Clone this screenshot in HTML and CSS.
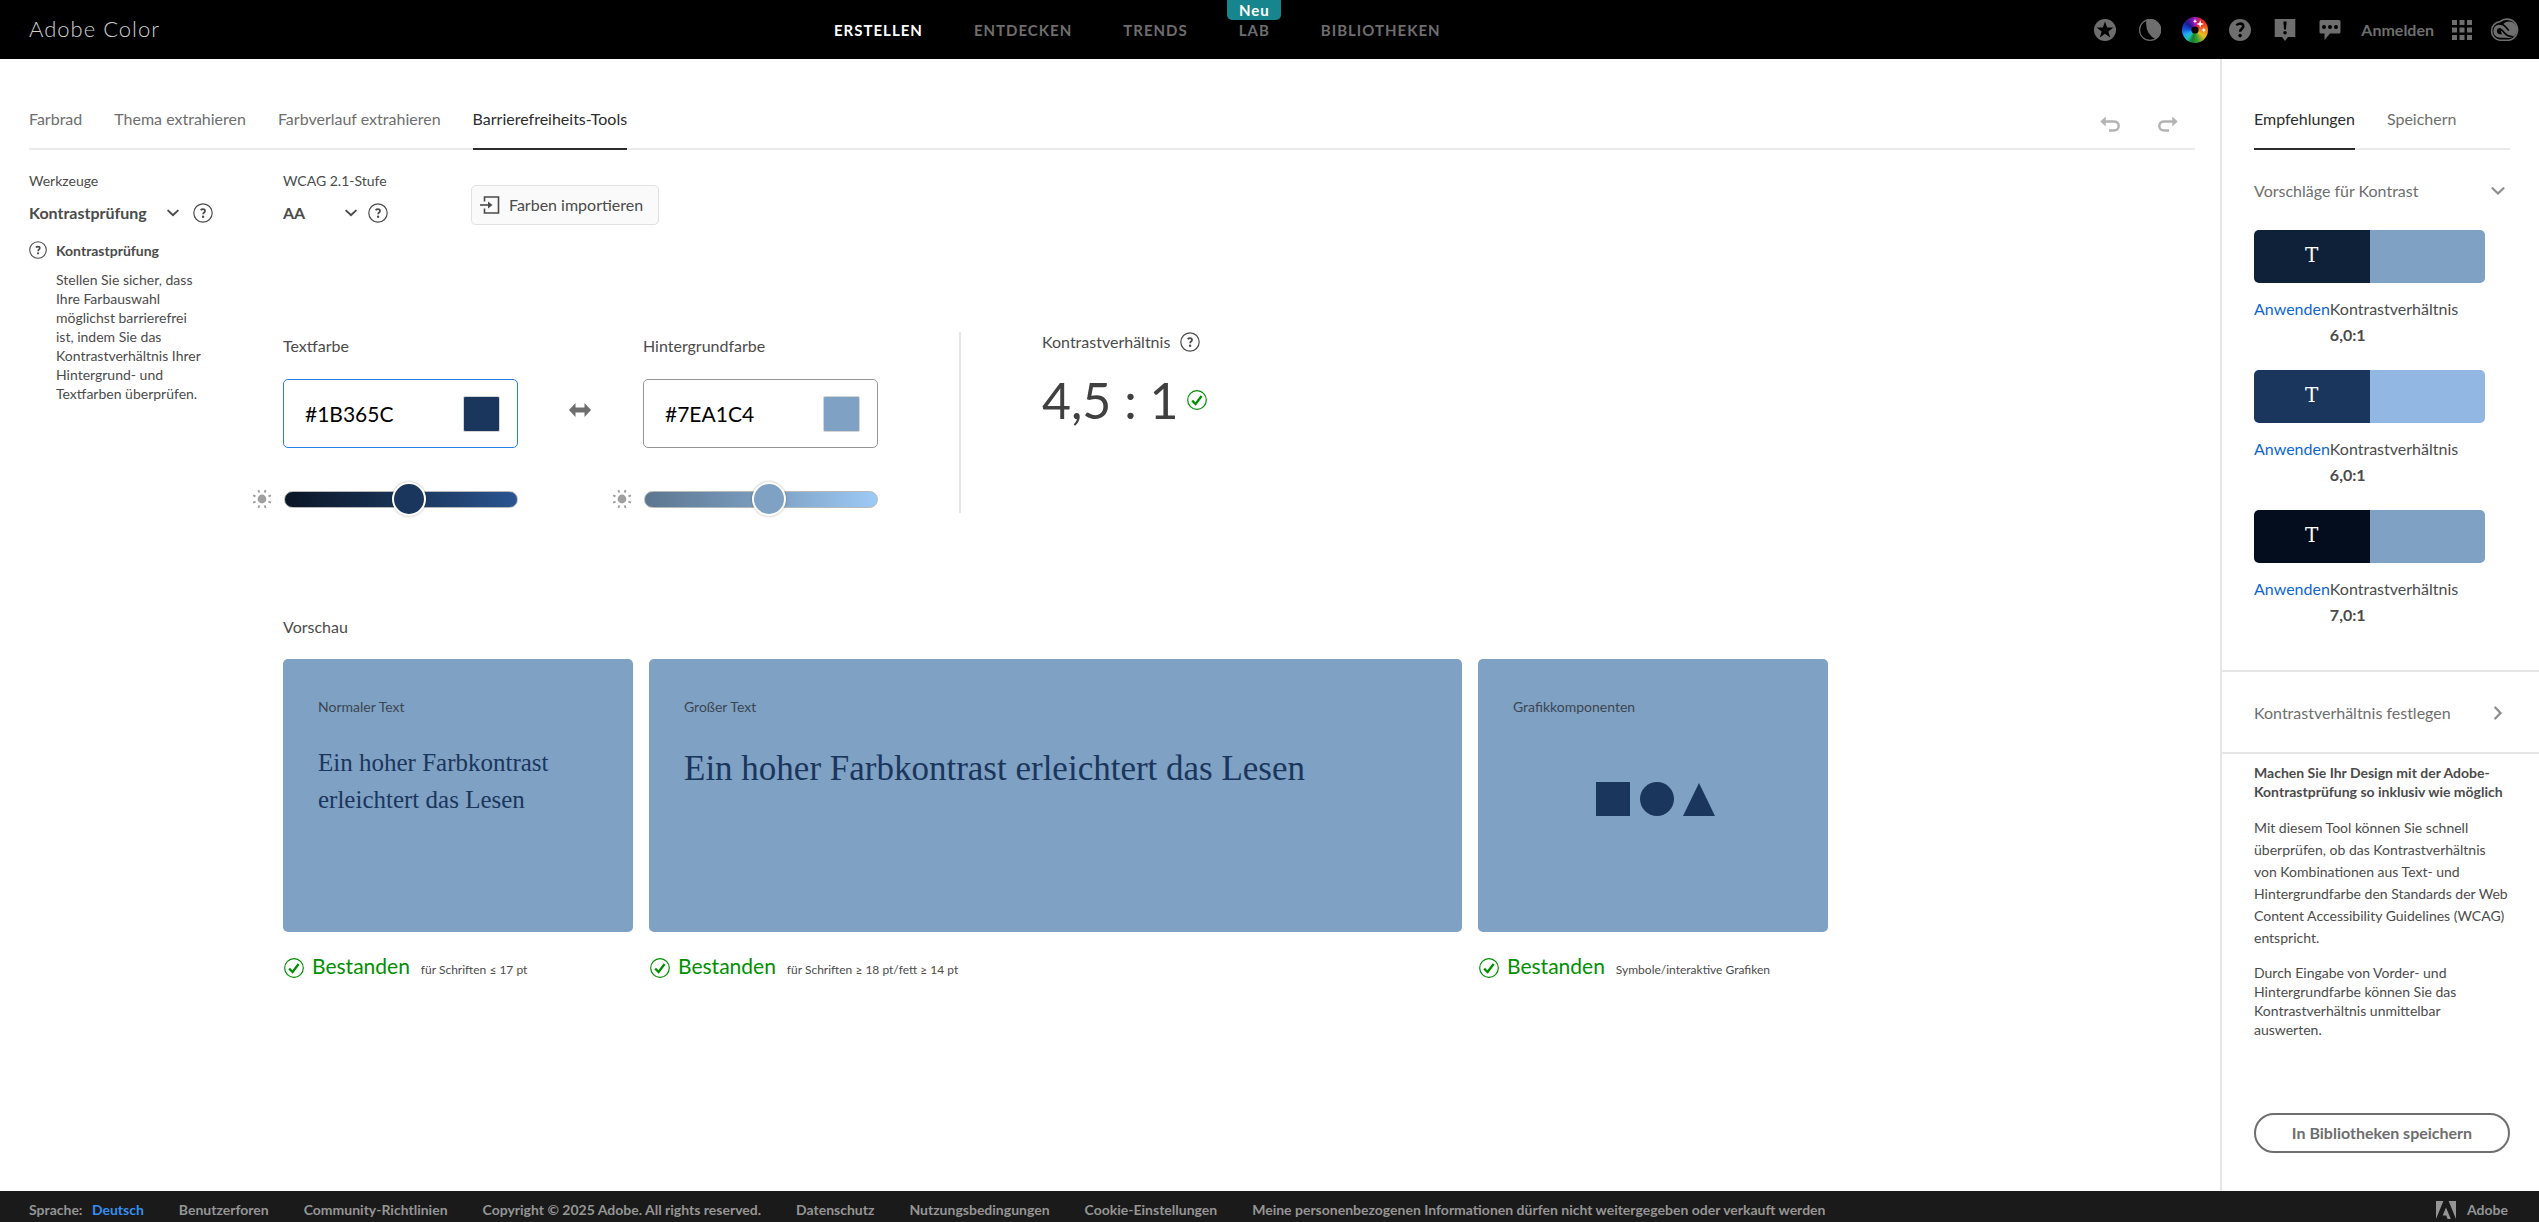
FILE: index.html
```html
<!DOCTYPE html>
<html lang="de">
<head>
<meta charset="utf-8">
<meta name="viewport" content="width=device-width, initial-scale=1">
<title>Adobe Color</title>
<link rel="stylesheet" href="styles.css">
</head>
<body>
<svg class="symbols" aria-hidden="true">
  <symbol id="i-help" viewBox="0 0 20 20"><circle cx="10" cy="10" r="9.2" fill="none" stroke="currentColor" stroke-width="1.2"/><path d="M7.7 7.2Q8.4 6.2 10 6.2Q12 6.2 12 7.9Q12 8.8 11 9.5Q10.2 10 10.2 11.3" fill="none" stroke="currentColor" stroke-width="1.8"/><circle cx="10.1" cy="13.7" r="1.2" fill="currentColor"/></symbol>
  <symbol id="i-check" viewBox="0 0 20 20"><circle cx="10" cy="10" r="9.3" fill="none" stroke="currentColor" stroke-width="1.2"/><path d="M5.2 10.6L8.6 14L14.6 6" fill="none" stroke="currentColor" stroke-width="2.3"/></symbol>
  <symbol id="i-chevron" viewBox="0 0 14 14"><path d="M2.2 4.6L7 9.2L11.8 4.6" fill="none" stroke="currentColor" stroke-width="2" stroke-linecap="round"/></symbol>
  <symbol id="i-sun" viewBox="0 0 20 20"><circle cx="10" cy="10" r="4.4" fill="currentColor"/><path d="M7.4 3.6L6.4 1M12.6 3.6L13.6 1M16.4 7.4L19 6.3M16.4 12.6L19 13.7M12.6 16.4L13.6 19M7.4 16.4L6.4 19M3.6 12.6L1 13.7M3.6 7.4L1 6.3" stroke="currentColor" stroke-width="1.8"/></symbol>
</svg>

<header class="topbar">
  <a class="brand" href="#">Adobe Color</a>
  <nav class="mainnav" aria-label="Hauptnavigation">
    <a class="current" href="#">ERSTELLEN</a>
    <a href="#">ENTDECKEN</a>
    <a href="#">TRENDS</a>
    <a class="has-badge" href="#">LAB<span class="badge">Neu</span></a>
    <a href="#">BIBLIOTHEKEN</a>
  </nav>
  <div class="actions">
    <button type="button" aria-label="Favoriten"><svg width="22" height="22" viewBox="0 0 22 22"><circle cx="11" cy="11" r="11" fill="currentColor"/><path d="M11 2.6L13.1 8.4L19.4 8.6L14.4 12.4L16.2 18.4L11 14.8L5.8 18.4L7.6 12.4L2.6 8.6L8.9 8.4Z" fill="#000"/></svg></button>
    <button type="button" aria-label="Design"><svg width="22" height="22" viewBox="0 0 22 22"><circle cx="11" cy="11" r="10.4" fill="none" stroke="currentColor" stroke-width="1.2"/><path d="M7.4 .6A11 11 0 0 1 17 20.3Q5.5 15 7.4 .6Z" fill="currentColor"/></svg></button>
    <button type="button" aria-label="Farbrad" class="wheel"><svg width="26" height="26" viewBox="0 0 26 26"><circle cx="13" cy="13" r="3.6" fill="#000"/><path d="M18.2 3L19.2 6L22 7L19.2 8L18.2 11L17.2 8L14.4 7L17.2 6ZM13 2L13.6 3.6L15 4.3L13.6 5L13 6.6L12.4 5L11 4.3L12.4 3.6ZM21.8 10.6L22.5 12.3L24 13L22.5 13.7L21.8 15.4L21.1 13.7L19.6 13L21.1 12.3Z" fill="#fff"/></svg></button>
    <button type="button" aria-label="Hilfe"><svg width="22" height="22" viewBox="0 0 22 22"><circle cx="11" cy="11" r="11" fill="currentColor"/><path d="M7.6 6.4Q8.8 4.5 11.2 4.5Q14.3 4.6 14.3 7.3Q14.3 8.8 12.5 10.1Q11.2 11 11.2 12.8" fill="none" stroke="#000" stroke-width="2.6"/><circle cx="11.1" cy="16.6" r="1.8" fill="#000"/></svg></button>
    <button type="button" aria-label="Feedback"><svg width="22" height="22" viewBox="0 0 22 22"><path d="M.7 0H21.3V18H14L11 22L8 18H.7Z" fill="currentColor"/><path d="M9.4 2.5H12.6L12 10.5H10Z" fill="#000"/><circle cx="11" cy="13.7" r="1.8" fill="#000"/></svg></button>
    <button type="button" aria-label="Forum"><svg width="22" height="22" viewBox="0 0 22 22"><path d="M2 1H20Q21.5 1 21.5 2.500V13Q21.500 14.500 20 14.500H11L5.500 21V14.500H2Q.5 14.500 .5 13V2.500Q.5 1 2 1Z" fill="currentColor"/><circle cx="5" cy="8" r="2" fill="#000"/><circle cx="11" cy="8" r="2" fill="#000"/><circle cx="17" cy="8" r="2" fill="#000"/></svg></button>
    <a class="signin" href="#">Anmelden</a>
    <button type="button" aria-label="Apps" class="tight"><svg width="20" height="20" viewBox="0 0 20 20" fill="currentColor"><path d="M0 0H5V5H0ZM7.500 0H12.500V5H7.500ZM15 0H20V5H15ZM0 7.500H5V12.500H0ZM7.500 7.500H12.500V12.500H7.500ZM15 7.500H20V12.500H15ZM0 15H5V20H0ZM7.500 15H12.500V20H7.500ZM15 15H20V20H15Z"/></svg></button>
    <button type="button" aria-label="Creative Cloud" class="tight"><svg width="30" height="24" viewBox="0 0 30 24" fill="none"><path d="M10 3.600A10.700 10.700 0 1 1 19 22.300H10A9.400 9.400 0 0 1 10 3.600Z" stroke="currentColor" stroke-width="1.600"/><circle cx="19" cy="11.700" r="8.200" fill="currentColor"/><path d="M12.600 9.200Q11.500 8.200 10 8.200A4.900 4.900 0 0 0 10 18H19" stroke="currentColor" stroke-width="3.600"/><path d="M22.800 18.500Q18 18.800 15 15.500L12.300 12.500Q10.700 11 9.200 12.200Q8 13.700 9.600 15" stroke="#000" stroke-width="1.600"/><path d="M9 6.300Q12.800 5.500 15.500 8.700L18.800 12.500" stroke="#000" stroke-width="1.600"/></svg></button>
  </div>
</header>

<div class="body">
  <main class="workspace">
    <div class="tabbar">
      <nav class="tabs" aria-label="Erstellen">
        <a href="#">Farbrad</a>
        <a href="#">Thema extrahieren</a>
        <a href="#">Farbverlauf extrahieren</a>
        <a class="current" href="#">Barrierefreiheits-Tools</a>
      </nav>
      <div class="history">
        <button type="button" aria-label="Rückgängig"><svg width="20" height="16" viewBox="0 0 20 16"><path d="M5 5.500H13.500Q18.700 5.500 18.700 10Q18.700 14.500 13.500 14.500H9" fill="none" stroke="currentColor" stroke-width="2.400"/><path d="M.3 5.500L5.700 .5V10.500Z" fill="currentColor"/></svg></button>
        <button type="button" aria-label="Wiederholen"><svg width="20" height="16" viewBox="0 0 20 16"><path d="M15 5.500H6.500Q1.300 5.500 1.300 10Q1.300 14.500 6.500 14.500H11" fill="none" stroke="currentColor" stroke-width="2.400"/><path d="M19.700 5.500L14.300 .5V10.500Z" fill="currentColor"/></svg></button>
      </div>
    </div>

    <div class="columns">
      <section class="tools">
        <label class="caption" for="tool">Werkzeuge</label>
        <div class="picker">
          <div class="select select-tool">
            <select id="tool"><option>Kontrastprüfung</option></select>
            <svg width="14" height="14"><use href="#i-chevron"/></svg>
          </div>
          <button type="button" aria-label="Hilfe"><svg width="20" height="20"><use href="#i-help"/></svg></button>
        </div>
        <div class="hint">
          <svg width="18" height="18"><use href="#i-help"/></svg>
          <div>
            <h2>Kontrastprüfung</h2>
            <p>Stellen Sie sicher, dass Ihre Farbauswahl möglichst barrierefrei ist, indem Sie das Kontrastverhältnis Ihrer Hintergrund- und Textfarben überprüfen.</p>
          </div>
        </div>
      </section>

      <div class="content">
        <div class="options">
          <div class="level">
            <label class="caption" for="level">WCAG 2.1-Stufe</label>
            <div class="picker picker-level">
              <div class="select select-level">
                <select id="level"><option>AA</option></select>
                <svg width="14" height="14"><use href="#i-chevron"/></svg>
              </div>
              <button type="button" aria-label="Hilfe"><svg width="20" height="20"><use href="#i-help"/></svg></button>
            </div>
          </div>
          <button class="import" type="button"><svg width="20" height="18" viewBox="0 0 20 18" fill="none" stroke="currentColor" stroke-width="1.600"><path d="M4.500 5.500V1H18.500V17H4.500V12.500"/><path d="M0 9H9"/><path d="M8 5.500L12.500 9L8 12.500Z" fill="currentColor" stroke="none"/></svg>Farben importieren</button>
        </div>

        <section class="checker">
          <div class="color">
            <label for="fg">Textfarbe</label>
            <div class="field focused">
              <input id="fg" type="text" value="#1B365C">
              <span class="swatch navy"></span>
            </div>
            <div class="brightness">
              <svg width="20" height="20"><use href="#i-sun"/></svg>
              <input class="range range-fg" type="range" min="0" max="100" value="54" aria-label="Helligkeit der Textfarbe">
            </div>
          </div>
          <button class="swap" type="button" aria-label="Farben tauschen"><svg width="22" height="14" viewBox="0 0 22 14"><path d="M0 7L6.500 0V4.500H15.500V0L22 7L15.500 14V9.500H6.500V14Z" fill="currentColor"/></svg></button>
          <div class="color">
            <label for="bg">Hintergrundfarbe</label>
            <div class="field">
              <input id="bg" type="text" value="#7EA1C4">
              <span class="swatch sky"></span>
            </div>
            <div class="brightness">
              <svg width="20" height="20"><use href="#i-sun"/></svg>
              <input class="range range-bg" type="range" min="0" max="100" value="54" aria-label="Helligkeit der Hintergrundfarbe">
            </div>
          </div>
          <div class="ratio">
            <div class="ratio-label">Kontrastverhältnis <button type="button" aria-label="Hilfe"><svg width="20" height="20"><use href="#i-help"/></svg></button></div>
            <div class="ratio-value">4,5 : 1 <svg width="20" height="20"><use href="#i-check"/></svg></div>
          </div>
        </section>

        <section class="preview">
          <h2>Vorschau</h2>
          <div class="cards">
            <article>
              <div class="card">
                <h3>Normaler Text</h3>
                <p class="sample">Ein hoher Farbkontrast erleichtert das Lesen</p>
              </div>
              <p class="result"><svg width="20" height="20"><use href="#i-check"/></svg><strong>Bestanden</strong><span>für Schriften ≤ 17 pt</span></p>
            </article>
            <article>
              <div class="card">
                <h3>Großer Text</h3>
                <p class="sample large">Ein hoher Farbkontrast erleichtert das Lesen</p>
              </div>
              <p class="result"><svg width="20" height="20"><use href="#i-check"/></svg><strong>Bestanden</strong><span>für Schriften ≥ 18 pt/fett ≥ 14 pt</span></p>
            </article>
            <article>
              <div class="card">
                <h3>Grafikkomponenten</h3>
                <svg class="shapes" width="126" height="34" viewBox="-6 0 126 34" fill="currentColor"><path d="M0 0H34V34H0Z"/><circle cx="61" cy="17" r="17"/><path d="M103 1L119 34H87Z"/></svg>
              </div>
              <p class="result"><svg width="20" height="20"><use href="#i-check"/></svg><strong>Bestanden</strong><span>Symbole/interaktive Grafiken</span></p>
            </article>
          </div>
        </section>
      </div>
    </div>
  </main>

  <aside class="sidebar">
    <nav class="tabs" aria-label="Seitenleiste">
      <a class="current" href="#">Empfehlungen</a>
      <a href="#">Speichern</a>
    </nav>
    <section class="suggestions">
      <button class="fold" type="button">Vorschläge für Kontrast<svg width="16" height="16"><use href="#i-chevron"/></svg></button>
      <ul>
        <li>
          <div class="pair"><span class="pair-ink">T</span><span class="sky"></span></div>
          <div class="apply"><a href="#">Anwenden</a><p>Kontrastverhältnis <b>6,0:1</b></p></div>
        </li>
        <li>
          <div class="pair"><span class="navy">T</span><span class="pair-light"></span></div>
          <div class="apply"><a href="#">Anwenden</a><p>Kontrastverhältnis <b>6,0:1</b></p></div>
        </li>
        <li>
          <div class="pair"><span class="pair-night">T</span><span class="sky"></span></div>
          <div class="apply"><a href="#">Anwenden</a><p>Kontrastverhältnis <b>7,0:1</b></p></div>
        </li>
      </ul>
    </section>
    <section class="set-ratio">
      <button class="fold closed" type="button">Kontrastverhältnis festlegen<svg width="16" height="16"><use href="#i-chevron"/></svg></button>
    </section>
    <section class="about">
      <h2>Machen Sie Ihr Design mit der Adobe-Kontrastprüfung so inklusiv wie möglich</h2>
      <p class="lead">Mit diesem Tool können Sie schnell überprüfen, ob das Kontrastverhältnis von Kombinationen aus Text- und Hintergrundfarbe den Standards der Web Content Accessibility Guidelines (WCAG) entspricht.</p>
      <p>Durch Eingabe von Vorder- und Hintergrundfarbe können Sie das Kontrastverhältnis unmittelbar auswerten.</p>
    </section>
    <button class="save" type="button">In Bibliotheken speichern</button>
  </aside>
</div>

<footer class="footer">
  <div class="language">Sprache: <a href="#">Deutsch</a></div>
  <a href="#">Benutzerforen</a>
  <a href="#">Community-Richtlinien</a>
  <span>Copyright © 2025 Adobe. All rights reserved.</span>
  <a href="#">Datenschutz</a>
  <a href="#">Nutzungsbedingungen</a>
  <a href="#">Cookie-Einstellungen</a>
  <a href="#">Meine personenbezogenen Informationen dürfen nicht weitergegeben oder verkauft werden</a>
  <a class="adobe" href="#"><svg width="20" height="18" viewBox="0 0 20 18" fill="currentColor"><path d="M0 0H7.400L0 18ZM12.600 0H20V18ZM10 6.600L14.800 18H11.600L10.200 14.400H6.700Z"/></svg>Adobe</a>
</footer>
</body>
</html>
```
FILE: styles.css
```css
* {
  box-sizing: border-box;
}

body {
  display: flex;
  flex-direction: column;
  min-height: 100vh;
  margin: 0;
  background: #fff;
  color: #4b4b4b;
  font-family: Lato, "Open Sans", sans-serif;
  font-size: 16px;
  line-height: 24px;
}

a {
  color: inherit;
  text-decoration: none;
}

h2,
h3,
p,
ul {
  margin: 0;
  padding: 0;
}

button {
  padding: 0;
  border: 0;
  background: none;
  color: inherit;
  font: inherit;
}

svg {
  display: block;
  flex: none;
}

.symbols {
  position: absolute;
  width: 0;
  height: 0;
}

/* Top bar */

.topbar {
  display: grid;
  grid-template-columns: 805px auto 1fr;
  align-items: center;
  height: 59px;
  padding: 0 19px 0 29px;
  background: #000;
  color: #6e6e6e;
}

.brand {
  padding-bottom: 2px;
  color: #d0d0d0;
  font-size: 22px;
  font-weight: 300;
  letter-spacing: 1px;
}

.mainnav {
  display: flex;
  gap: 51px;
  align-self: stretch;
  font-size: 15px;
  font-weight: 700;
  line-height: 60px;
  letter-spacing: 1px;
}

.mainnav .current {
  color: #fff;
}

.has-badge {
  position: relative;
}

.badge {
  position: absolute;
  top: 0;
  left: 50%;
  width: 54px;
  margin-left: -27px;
  border-radius: 0 0 5px 5px;
  background: #17858d;
  color: #fff;
  line-height: 20px;
  text-align: center;
}

.actions {
  display: flex;
  align-items: center;
  justify-content: flex-end;
  gap: 18px;
}

.actions button {
  display: grid;
  place-items: center;
  width: 27px;
}

.actions .tight {
  width: auto;
}

.wheel svg {
  border-radius: 50%;
  background: conic-gradient(#a01cc8, #e8202c 30deg, #f04020 60deg, #f58220 90deg, #e8c020 125deg, #3ea030 165deg, #108030 195deg, #20c0b0 220deg, #20a8f8 245deg, #1450d8 275deg, #1a1a90 310deg, #5a18a0 335deg, #a01cc8);
}

.signin {
  font-weight: 700;
}

/* Page frame */

.body {
  display: grid;
  grid-template-columns: 1fr 319px;
  flex: 1;
}

.workspace {
  padding: 48px 25px 0 29px;
}

.tabbar {
  display: flex;
  justify-content: space-between;
  border-bottom: 2px solid #eaeaea;
}

.tabs {
  display: flex;
  gap: 32px;
  margin-bottom: -2px;
  color: #6e6e6e;
}

.tabs a {
  padding-bottom: 17px;
  border-bottom: 2px solid transparent;
}

.tabs .current {
  border-color: #2c2c2c;
  color: #2c2c2c;
}

.history {
  display: flex;
  gap: 38px;
  padding: 9px 17px 0 0;
  color: #b3b3b3;
  align-items: flex-start;
}

.columns {
  display: grid;
  grid-template-columns: 254px 1fr;
  padding-top: 21px;
}

/* Tool picker */

.caption {
  display: block;
  margin-bottom: 10px;
  font-size: 14px;
  line-height: 20px;
}

.picker {
  display: flex;
  align-items: center;
  gap: 13px;
}

.picker-level {
  gap: 10px;
}

.select {
  display: grid;
  align-items: center;
}

.select-tool {
  width: 151px;
}

.select-level {
  width: 75px;
}

.select select,
.select svg {
  grid-area: 1 / 1;
}

.select svg {
  justify-self: end;
  pointer-events: none;
}

.select select {
  appearance: none;
  padding: 0;
  border: 0;
  background: none;
  color: #4b4b4b;
  font: inherit;
  font-weight: 700;
}

.hint {
  display: flex;
  gap: 9px;
  width: 175px;
  padding-top: 16px;
  font-size: 14px;
  line-height: 19px;
}

.hint h2 {
  margin-bottom: 10px;
  font-size: 14px;
  line-height: 19px;
}

/* Options */

.options {
  display: flex;
}

.level {
  width: 188px;
}

.import {
  display: flex;
  align-items: center;
  gap: 9px;
  height: 40px;
  margin-top: 14px;
  padding: 0 15px 0 8px;
  border: 1px solid #e1e1e1;
  border-radius: 5px;
  background: #fafafa;
}

/* Contrast checker */

.checker {
  display: flex;
  align-items: flex-start;
  margin-top: 107px;
}

.color {
  width: 235px;
  padding-top: 2px;
}

.color label {
  display: block;
  margin-bottom: 21px;
}

.field {
  display: flex;
  align-items: center;
  justify-content: space-between;
  height: 69px;
  padding: 0 17px 0 21px;
  border: 1px solid #959595;
  border-radius: 5px;
}

.field.focused {
  border-color: #2680eb;
}

.field input {
  width: 130px;
  padding: 0;
  border: 0;
  outline: 0;
  background: none;
  color: #000;
  font: inherit;
  font-size: 21px;
}

.swatch {
  width: 37px;
  height: 36px;
  border: 1px solid #d5d5d5;
  border-radius: 2px;
}

.navy {
  background: #1b365c;
}

.sky {
  background: #7ea1c4;
}

.brightness {
  display: flex;
  align-items: center;
  gap: 12px;
  margin: 34px 0 0 -31px;
  color: #a0a0a0;
}

.range {
  appearance: none;
  width: 234px;
  height: 34px;
  margin: 0;
  background: none;
}

.range::-webkit-slider-runnable-track {
  height: 17px;
  border: 1px solid #b8b8b8;
  border-radius: 9px;
}

.range-fg::-webkit-slider-runnable-track {
  background: linear-gradient(90deg, #0b1626, #1b365c 55%, #2a5592);
}

.range-bg::-webkit-slider-runnable-track {
  background: linear-gradient(90deg, #5c7690, #7ea1c4 55%, #9dcaf6);
}

.range::-webkit-slider-thumb {
  appearance: none;
  width: 34px;
  height: 34px;
  margin-top: -10px;
  border: 2px solid #fff;
  border-radius: 50%;
  background: #1b365c;
  box-shadow: 0 0 3px rgba(0, 0, 0, 0.3);
}

.range-bg::-webkit-slider-thumb {
  background: #7ea1c4;
}

.swap {
  margin: 71px 52px 0 51px;
  color: #6e6e6e;
}

.ratio {
  height: 181px;
  margin-left: 81px;
  padding-left: 81px;
  border-left: 2px solid #e6e6e6;
}

.ratio-label {
  display: flex;
  align-items: center;
  gap: 10px;
  line-height: 20px;
}

.ratio-value {
  display: flex;
  align-items: center;
  gap: 9px;
  margin-top: 14px;
  color: #404040;
  font-size: 50px;
  line-height: 68px;
}

.ratio-value svg,
.result svg {
  color: #008f00;
}

/* Preview */

.preview {
  max-width: 1545px;
  margin-top: 99px;
}

.preview h2 {
  margin-bottom: 20px;
  font-size: 16px;
  font-weight: 400;
  line-height: 24px;
}

.cards {
  display: grid;
  grid-template-columns: 350px 1fr 350px;
  gap: 16px;
}

.card {
  display: flex;
  flex-direction: column;
  min-height: 273px;
  padding: 38px 35px;
  border-radius: 5px;
  background: #7ea1c4;
  color: #1b365c;
}

.card h3 {
  margin-bottom: 27px;
  color: #3c4652;
  font-size: 14px;
  font-weight: 400;
  line-height: 20px;
}

.sample {
  font-family: "Liberation Serif", serif;
  font-size: 25px;
  line-height: 37px;
}

.sample.large {
  font-size: 35px;
  line-height: 50px;
}

.shapes {
  align-self: center;
  margin-top: 38px;
}

.result {
  display: flex;
  align-items: baseline;
  gap: 8px;
  margin-top: 20px;
  padding-left: 1px;
  font-size: 12px;
  line-height: 28px;
}

.result svg {
  align-self: center;
}

.result strong {
  margin-right: 3px;
  color: #008f00;
  font-size: 21px;
  font-weight: 400;
}

/* Sidebar */

.sidebar {
  display: flex;
  flex-direction: column;
  padding: 48px 29px 38px 32px;
  border-left: 2px solid #e6e6e6;
}

.sidebar .tabs {
  margin-bottom: 0;
  box-shadow: inset 0 -2px #eaeaea;
}

.fold {
  display: flex;
  align-items: center;
  justify-content: space-between;
  width: 100%;
  padding: 0 4px 0 0;
  color: #6e6e6e;
}

.fold svg {
  color: #8e8e8e;
}

.fold.closed svg {
  rotate: -90deg;
}

.suggestions {
  padding: 29px 0 20px;
}

.suggestions ul {
  list-style: none;
}

.suggestions li {
  padding: 27px 0 0;
}

.suggestions li + li {
  padding-top: 22px;
}

.pair {
  display: grid;
  grid-template-columns: 1fr 1fr;
  max-width: 231px;
  height: 53px;
  overflow: hidden;
  border-radius: 5px;
  color: #fff;
  font-family: "DejaVu Serif", serif;
  font-size: 20px;
  line-height: 51px;
  text-align: center;
}

.pair-ink {
  background: #0e2138;
}

.pair-light {
  background: #92b7e2;
}

.pair-night {
  background: #030d1e;
}

.apply {
  display: flex;
  max-width: 231px;
  padding-top: 13px;
  line-height: 26px;
}

.apply a {
  color: #0d66d0;
}

.set-ratio {
  margin: 22px -29px 0 -32px;
  padding: 29px 29px 27px 32px;
  border: 2px solid #e6e6e6;
  border-width: 2px 0;
}

.about {
  padding: 9px 0 40px;
  font-size: 14px;
  line-height: 19px;
}

.about h2 {
  margin-right: -5px;
  font-size: 14px;
}

.about .lead {
  margin: 16px 0 14px;
  line-height: 22px;
}

.save {
  height: 40px;
  margin-top: auto;
  border: 2px solid #6e6e6e;
  border-radius: 20px;
  color: #6e6e6e;
  font-weight: 700;
}

/* Footer */

.footer {
  display: flex;
  gap: 35px;
  padding: 8px 31px 1px 29px;
  background: #1a1a1a;
  color: #959595;
  font-size: 14px;
  font-weight: 700;
  line-height: 22px;
}

.language a {
  margin-left: 6px;
  color: #378ef0;
}

.adobe {
  display: flex;
  gap: 11px;
  align-items: center;
  margin-left: auto;
}
```
